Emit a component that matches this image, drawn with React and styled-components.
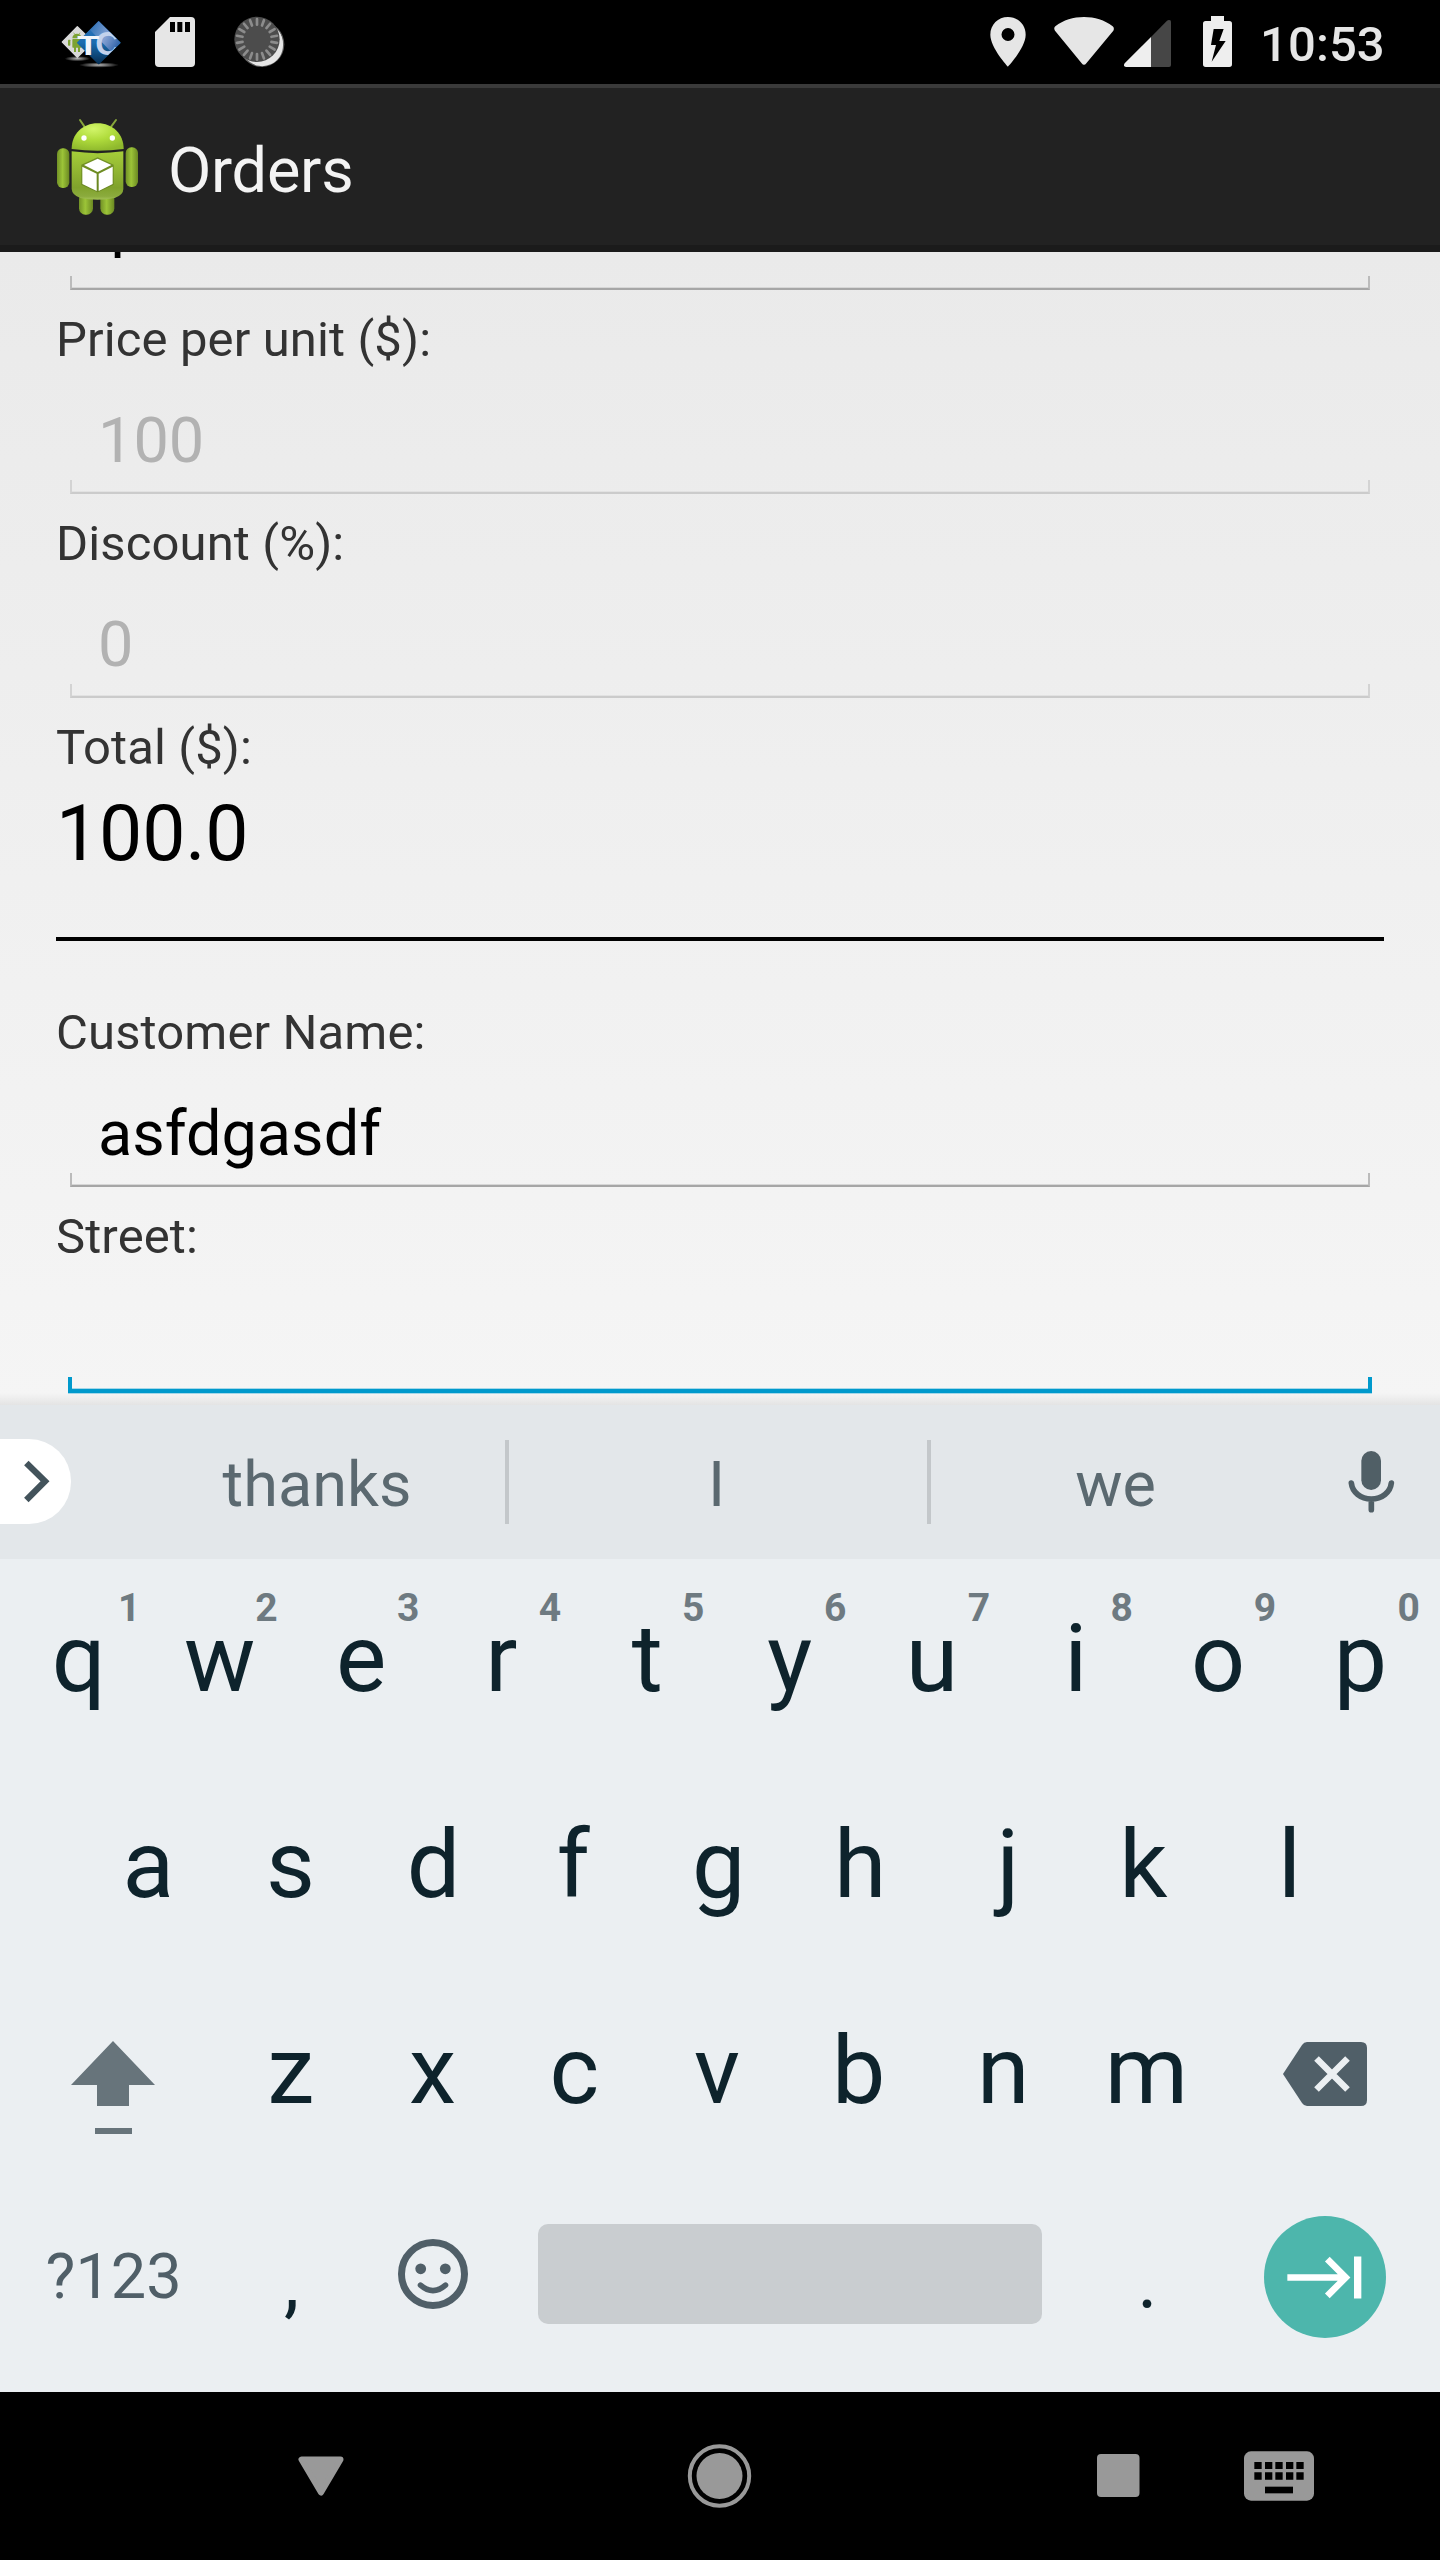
import React from 'react';
import styled, { createGlobalStyle } from 'styled-components';

const Global = createGlobalStyle`
  html, body { margin: 0; padding: 0; background: #000; }
  * { box-sizing: border-box; }
  svg { display: block; flex: none; }
`;

const Screen = styled.div`
  width: 1440px;
  height: 2560px;
  display: flex;
  flex-direction: column;
  overflow: hidden;
  font-family: Roboto, 'Liberation Sans', sans-serif;
  white-space: nowrap;
`;

/* ---------- status bar ---------- */

const StatusBar = styled.header`
  flex: none;
  height: 84px;
  padding: 16px 56px 0 61px;
  display: flex;
  justify-content: space-between;
  background: #000;
`;

const StatusGroup = styled.div`
  display: flex;
  align-items: flex-start;
`;

const StatusIcon = styled.svg`
  width: ${(p) => p.$w}px;
  height: 53px;
  margin-right: ${(p) => p.$after || 0}px;
`;

const Clock = styled.span`
  width: 124px;
  padding-right: 1px;
  text-align: right;
  font-size: 49px;
  font-weight: 500;
  line-height: 57px;
  letter-spacing: 0.1px;
  color: #e6e6e6;
`;

/* ---------- action bar ---------- */

const ActionBar = styled.div`
  flex: none;
  height: 168px;
  padding: 0 0 0 55px;
  display: flex;
  align-items: center;
  gap: 28px;
  background: #222;
  border-top: 4px solid #3a3a3a;
  border-bottom: 7px solid #1b1b1b;
`;

const Title = styled.h1`
  margin: 9px 0 0;
  font-size: 63px;
  font-weight: 400;
  line-height: 74px;
  letter-spacing: -0.25px;
  color: #f3f3f3;
`;

/* ---------- form ---------- */

const ScrollArea = styled.main`
  flex: none;
  height: 1153px;
  overflow: hidden;
  background:
    linear-gradient(to bottom, rgba(0, 0, 0, 0) 1141px, rgba(0, 0, 0, 0.07) 1153px),
    linear-gradient(to bottom, #eaeaea, #f5f5f5);
`;

const Form = styled.div`
  margin-top: -88px;
  padding: 0 56px;
  display: flex;
  flex-direction: column;
`;

const Label = styled.label`
  height: 57px;
  font-size: 49px;
  line-height: 57px;
  letter-spacing: 0.12px;
  color: #333;
`;

const Field = styled.div`
  height: 147px;
  padding: 36px ${(p) => (p.$focused ? 12 : 14)}px 0;
`;

const Value = styled.div`
  height: 76px;
  padding-left: 28px;
  font-size: 63px;
  line-height: 74px;
  color: ${(p) => (p.$disabled ? '#b2b2b2' : '#000')};
`;

const Underline = styled.div`
  height: 14px;
  border: 2px solid ${(p) => (p.$disabled ? '#cbcbcb' : '#a6a6a6')};
  border-left-color: ${(p) => (p.$disabled ? '#d3d3d3' : '#bbb')};
  border-right-color: ${(p) => (p.$disabled ? '#d3d3d3' : '#bbb')};
  border-top: 0;
  box-shadow: inset 0 -1px 0 ${(p) => (p.$disabled ? '#e2e2e2' : '#d6d6d6')};
`;

const FocusUnderline = styled.div`
  height: 16px;
  border: 4px solid #0099cc;
  border-top: 0;
  box-shadow: inset 0 -1px 0 #a5d7e8, 0 1px 0 #a5d7e8;
`;

const TotalValue = styled.div`
  height: 161px;
  padding-top: 13px;
  font-size: 77px;
  line-height: 90px;
  letter-spacing: -0.2px;
  color: #000;
`;

const Divider = styled.hr`
  width: 100%;
  height: 4px;
  margin: 0 0 63px;
  border: 0;
  background: #000;
`;

/* ---------- keyboard ---------- */

const Suggestions = styled.div`
  flex: none;
  height: 154px;
  display: flex;
  align-items: center;
  background: #e3e7ea;
`;

const ExpandPill = styled.div`
  width: 71px;
  height: 85px;
  margin: 0 55px 1px 0;
  display: flex;
  align-items: center;
  justify-content: flex-end;
  padding-right: 19px;
  border-radius: 0 42px 42px 0;
  background: #fff;
`;

const Suggestion = styled.div`
  width: ${(p) => p.$w}px;
  padding: 5px ${(p) => p.$padRight || 0}px 0 ${(p) => p.$padLeft || 0}px;
  text-align: center;
  font-size: 63px;
  line-height: 74px;
  color: #5b6970;
`;

const Separator = styled.div`
  width: 4px;
  height: 84px;
  background: #c3c7ca;
`;

const MicCell = styled.div`
  width: 138px;
  display: flex;
  justify-content: center;
`;

const Keys = styled.div`
  flex: none;
  height: 833px;
  padding: 4px 6px 0;
  background: #ebeff2;
`;

const Row = styled.div`
  height: 206px;
  display: flex;
  justify-content: center;
`;

const Key = styled.div`
  width: ${(p) => (p.$span || 1) * 142.8}px;
  height: 206px;
  padding-bottom: 15px;
  position: relative;
  display: flex;
  align-items: center;
  justify-content: center;
  font-size: 95px;
  line-height: 111px;
  color: #0e232c;
`;

/* Centres the ink of a letter rather than its advance width. */
const Letter = styled.span`
  margin-left: ${(p) => p.$nudge * 2}px;
`;

const Hint = styled.span`
  position: absolute;
  top: 22px;
  right: ${(p) => p.$right}px;
  font-size: 39px;
  font-weight: 700;
  line-height: 46px;
  color: #6e7a81;
`;

const ModeText = styled.span`
  padding-left: 1px;
  font-size: 63px;
  line-height: 74px;
  color: #505f68;
`;

const Punctuation = styled.span`
  padding: 11px ${(p) => p.$padRight || 0}px 0 0;
  font-size: 77px;
  line-height: 90px;
`;

const ShiftBox = styled.div`
  padding-top: 35px;
`;

const BackspaceBox = styled.div`
  padding: 7px 4px 0 0;
`;

const EmojiBox = styled.div`
  padding: 0 3px 5px 0;
`;

const SpaceBar = styled.div`
  width: 504px;
  height: 100px;
  margin: 0 2px 5px 0;
  border-radius: 10px;
  background: #c9cdd0;
`;

const EnterButton = styled.div`
  width: 122px;
  height: 122px;
  margin-right: 3px;
  display: flex;
  align-items: center;
  justify-content: center;
  border-radius: 50%;
  background: #4db6ac;
`;

/* ---------- navigation bar ---------- */

const NavBar = styled.nav`
  flex: none;
  height: 168px;
  padding: 0 126px 0 298px;
  display: flex;
  align-items: center;
  background: #000;
`;

const NavIcon = styled.svg`
  margin: 0 ${(p) => p.$after || 0}px 1px 0;
`;

/* ---------- drawings ---------- */

const TcIcon = () => (
  <StatusIcon $w={60} $after={34} viewBox="183 48 180 159">
    <defs>
      <linearGradient id="tcBlue" x1="0" y1="0" x2="0" y2="1">
        <stop offset="0" stopColor="#2e6fb8" />
        <stop offset="0.5" stopColor="#1a6db0" />
        <stop offset="1" stopColor="#062f55" />
      </linearGradient>
      <linearGradient id="tcShine" x1="0" y1="0" x2="1" y2="0.6">
        <stop offset="0" stopColor="#7c9dd0" stopOpacity="0" />
        <stop offset="0.6" stopColor="#8fa6d6" stopOpacity="0.9" />
        <stop offset="1" stopColor="#3768ac" />
      </linearGradient>
      <radialGradient id="tcGlow">
        <stop offset="0" stopColor="#bbb" />
        <stop offset="1" stopColor="#000" />
      </radialGradient>
      <clipPath id="tcClip"><path d="M296 63L362 128L296 193L231 128Z" /></clipPath>
    </defs>
    <ellipse cx="232" cy="176" rx="38" ry="8" fill="url(#tcGlow)" />
    <ellipse cx="297" cy="195" rx="60" ry="8" fill="url(#tcGlow)" />
    <path d="M232 80L279 126L232 172L187 126Z" fill="#dadada" stroke="#dadada" strokeWidth="4" strokeLinejoin="round" />
    <g fill="#7da333">
      <path d="M217 115a14 14 0 0 1 28 0Z" />
      <path d="M221 98l4 6M240 98l-4 6" stroke="#7da333" strokeWidth="2" />
      <rect x="217" y="117" width="28" height="26" rx="2" />
      <rect x="204" y="119" width="7" height="18" rx="2" />
      <rect x="222" y="141" width="6" height="15" />
      <rect x="234" y="141" width="6" height="15" />
    </g>
    <path d="M296 65L360 128L296 191L233 128Z" fill="url(#tcBlue)" stroke="url(#tcBlue)" strokeWidth="4" strokeLinejoin="round" />
    <g clipPath="url(#tcClip)">
      <path d="M296 63L362 128L334 156L270 90Z" fill="url(#tcShine)" />
      <text x="286" y="165" fontFamily="Liberation Sans, sans-serif" fontWeight="700" fontSize="102" fill="#c3d2ec">C</text>
    </g>
    <text x="232" y="164" fontFamily="Liberation Sans, sans-serif" fontWeight="700" fontSize="81" textLength="66" lengthAdjust="spacingAndGlyphs" fill="#f1f5fa">T</text>
  </StatusIcon>
);

const SdIcon = () => (
  <StatusIcon $w={40} $after={39} viewBox="465 48 120 159">
    <path d="M510 51H573a12 12 0 0 1 12 12V189a12 12 0 0 1-12 12H477a12 12 0 0 1-12-12V96Z" fill="#e6e6e6" />
    <path d="M510 66h15v30h-15zM532 66h15v30h-15zM555 66h15v30h-15z" fill="#000" />
  </StatusIcon>
);

const SpinnerIcon = () => (
  <StatusIcon $w={51} viewBox="701 48 153 159">
    <circle cx="784" cy="133" r="68" fill="#5c5c5c" />
    <path d="M834 92A66 66 0 0 1 744 182A62 62 0 0 0 848 136A66 66 0 0 0 834 92Z" fill="#e6e6e6" />
    <circle cx="781" cy="129" r="65" fill="#e6e6e6" />
    <circle cx="770" cy="118" r="68" fill="#4c4c4c" />
    {Array.from({ length: 18 }, (_, i) => (
      <path key={i} d="M770 57V74" stroke="#8c8c8c" strokeWidth="8" strokeLinecap="round" transform={`rotate(${i * 20} 770 118)`} />
    ))}
  </StatusIcon>
);

const PinIcon = () => (
  <StatusIcon $w={36} $after={28} viewBox="90 48 108 159">
    <path
      fillRule="evenodd"
      fill="#e6e6e6"
      d="M144 51C114 51 91 74 91 104C91 143 144 200 144 200S197 143 197 104C197 74 174 51 144 51ZM144 84a19.500 19.500 0 1 1 0 39a19.500 19.500 0 1 1 0-39Z"
    />
  </StatusIcon>
);

const WifiIcon = () => (
  <StatusIcon $w={60} $after={10} viewBox="282 48 180 159">
    <path d="M286 79C310 60 340 51 372 51S434 60 458 79Q464 84 460 92L379 190Q372 199 365 190L285 92Q280 84 286 79Z" fill="#e6e6e6" />
  </StatusIcon>
);

const SignalIcon = () => (
  <StatusIcon $w={47} $after={32} viewBox="492 48 141 159">
    <path d="M573 111L621 62Q626 58 631 61Q633 63 633 67V195Q633 201 627 201H573Z" fill="#464646" />
    <path d="M573 111V201H498Q488 199 494 190Z" fill="#eee" />
  </StatusIcon>
);

const BatteryIcon = () => (
  <StatusIcon $w={29} $after={28} viewBox="729 48 87 159">
    <path d="M753 48H792V63H808Q816 63 816 71V193Q816 201 808 201H737Q729 201 729 193V71Q729 63 737 63H753Z" fill="#eee" />
    <path d="M761 87H791L778 123H797L755 185L768 135H753Z" fill="#000" />
  </StatusIcon>
);

const Robot = () => (
  <svg width="85" height="102" viewBox="165 351 255 306">
    <defs>
      <radialGradient id="head" cx="0.42" cy="0.2" r="0.8">
        <stop offset="0" stopColor="#d2f56a" />
        <stop offset="0.5" stopColor="#b0dc3c" />
        <stop offset="1" stopColor="#8fb92d" />
      </radialGradient>
      <linearGradient id="torso" x1="0" y1="0" x2="0" y2="1">
        <stop offset="0" stopColor="#a5cd39" />
        <stop offset="0.75" stopColor="#80a22c" />
        <stop offset="0.93" stopColor="#8bab3d" />
        <stop offset="1" stopColor="#a4c257" />
      </linearGradient>
      <linearGradient id="limb" x1="0" y1="0" x2="1" y2="0">
        <stop offset="0" stopColor="#729226" />
        <stop offset="0.45" stopColor="#9cc438" />
        <stop offset="1" stopColor="#6b8922" />
      </linearGradient>
    </defs>
    <path d="M240 363L253 382M348 363L334 382" stroke="#86a53a" strokeWidth="6" strokeLinecap="round" />
    <rect x="237" y="580" width="42" height="67" rx="19" fill="url(#limb)" />
    <rect x="301" y="580" width="42" height="67" rx="19" fill="url(#limb)" />
    <rect x="171" y="448" width="37" height="119" rx="17" fill="url(#limb)" />
    <rect x="377" y="445" width="37" height="119" rx="17" fill="url(#limb)" />
    <path d="M215 450C215 405 248 373 293 373S371 405 371 450Q293 461 215 450Z" fill="url(#head)" />
    <path d="M215 457Q293 468 370 457V570Q370 588 344 597Q293 607 241 597Q216 588 215 570Z" fill="url(#torso)" />
    <circle cx="252" cy="417" r="8" fill="#fff" />
    <circle cx="337" cy="417" r="8" fill="#fff" />
    <path d="M244 497L293 475L341 497V557L293 580L244 557Z" fill="#5f7b1c" opacity="0.7" />
    <g fill="#fff">
      <path d="M293 479L334 498L293 519L252 498Z" />
      <path d="M247 503L290 524V576L247 555Z" />
      <path d="M338 503L296 524V576L338 555Z" />
    </g>
  </svg>
);

const Chevron = () => (
  <svg width="30" height="45" viewBox="66 207 90 135">
    <path d="M79 219L135 274L79 330" fill="none" stroke="#43535b" strokeWidth="19" />
  </svg>
);

const Mic = () => (
  <svg width="48" height="62" viewBox="1161 900 144 186">
    <rect x="1204" y="900" width="59" height="117" rx="29.500" fill="#505f66" />
    <path d="M1174 996C1177 1024 1202 1044 1234 1044S1291 1024 1294 996M1234 1044V1076" fill="none" stroke="#505f66" strokeWidth="17" strokeLinecap="round" />
  </svg>
);

const Shift = () => (
  <svg width="84" height="134" viewBox="71 2021 84 134">
    <path d="M113 2041L155 2085H129V2106H97V2085H71ZM95 2128H132V2134H95Z" fill="#67747b" />
  </svg>
);

const Backspace = () => (
  <svg width="84" height="64" viewBox="1283 2042 84 64">
    <path d="M1307 2042H1361Q1367 2042 1367 2048V2100Q1367 2106 1361 2106H1307Q1304 2106 1302 2103L1283 2074L1302 2045Q1304 2042 1307 2042Z" fill="#505f68" />
    <path d="M1316.500 2058.500L1347.500 2089.500M1347.500 2058.500L1316.500 2089.500" stroke="#ebeff2" strokeWidth="6.500" />
  </svg>
);

const Emoji = () => (
  <svg width="70" height="70" viewBox="0 0 70 70">
    <circle cx="35" cy="35" r="31.500" fill="none" stroke="#505f68" strokeWidth="7" />
    <circle cx="22.700" cy="29.800" r="5.400" fill="#505f68" />
    <circle cx="47.300" cy="29.800" r="5.400" fill="#505f68" />
    <path d="M22.500 46.200Q35 57 47.500 46.200" fill="none" stroke="#505f68" strokeWidth="5.600" strokeLinecap="round" />
  </svg>
);

const TabArrow = () => (
  <svg width="122" height="122" viewBox="914 166.500 366 366">
    <path d="M984 351H1155M1104 296L1159 351L1104 406" fill="none" stroke="#fff" strokeWidth="20" />
    <rect x="1184" y="288" width="22" height="126" fill="#fff" />
  </svg>
);

/* Each letter with the pixels that bring its ink to the middle of the key. */
const TOP_ROW = [
  ['q', 1.3], ['w', -0.5], ['e', -1.8], ['r', -4.5], ['t', -1.2],
  ['y', -1.6], ['u', -2.2], ['i', -1.3], ['o', -1.8], ['p', -2.1],
];
const HOME_ROW = [
  ['a', -0.5], ['s', -1.1], ['d', -0.8], ['f', -3.9], ['g', -1.3],
  ['h', -2.6], ['j', 2.5], ['k', -5], ['l', -1.7],
];
const BOTTOM_ROW = [
  ['z', -0.8], ['x', -1.9], ['c', -2.8], ['v', -3], ['b', -4.1], ['n', -2.4], ['m', -1.9],
];

const HINT_RIGHT = [8.5, 14, 15, 16, 15.5, 16.5, 15.5, 15.5, 15, 14];

const LetterKey = ({ letter, nudge, children }) => (
  <Key>
    <Letter $nudge={nudge}>{letter}</Letter>
    {children}
  </Key>
);

const FormField = ({ label, value, disabled }) => (
  <>
    {label && <Label>{label}</Label>}
    <Field>
      <Value $disabled={disabled}>{value}</Value>
      <Underline $disabled={disabled} />
    </Field>
  </>
);

export default function App() {
  return (
    <Screen>
      <Global />
      <StatusBar>
        <StatusGroup>
          <TcIcon />
          <SdIcon />
          <SpinnerIcon />
        </StatusGroup>
        <StatusGroup>
          <PinIcon />
          <WifiIcon />
          <SignalIcon />
          <BatteryIcon />
          <Clock>10:53</Clock>
        </StatusGroup>
      </StatusBar>

      <ActionBar>
        <Robot />
        <Title>Orders</Title>
      </ActionBar>

      <ScrollArea>
        <Form>
          <FormField value="1" />
          <FormField label="Price per unit ($):" value="100" disabled />
          <FormField label="Discount (%):" value="0" disabled />
          <Label>Total ($):</Label>
          <TotalValue>100.0</TotalValue>
          <Divider />
          <FormField label="Customer Name:" value="asfdgasdf" />
          <Label>Street:</Label>
          <Field $focused>
            <Value />
            <FocusUnderline />
          </Field>
        </Form>
      </ScrollArea>

      <Suggestions>
        <ExpandPill><Chevron /></ExpandPill>
        <Suggestion $w={379} $padLeft={3}>thanks</Suggestion>
        <Separator />
        <Suggestion $w={418} $padRight={3}>I</Suggestion>
        <Separator />
        <Suggestion $w={371} $padRight={2}>we</Suggestion>
        <MicCell><Mic /></MicCell>
      </Suggestions>

      <Keys>
        <Row>
          {TOP_ROW.map(([letter, nudge], i) => (
            <LetterKey key={letter} letter={letter} nudge={nudge}>
              <Hint $right={HINT_RIGHT[i]}>{(i + 1) % 10}</Hint>
            </LetterKey>
          ))}
        </Row>
        <Row>
          {HOME_ROW.map(([letter, nudge]) => <LetterKey key={letter} letter={letter} nudge={nudge} />)}
        </Row>
        <Row>
          <Key $span={1.5}><ShiftBox><Shift /></ShiftBox></Key>
          {BOTTOM_ROW.map(([letter, nudge]) => <LetterKey key={letter} letter={letter} nudge={nudge} />)}
          <Key $span={1.5}><BackspaceBox><Backspace /></BackspaceBox></Key>
        </Row>
        <Row>
          <Key $span={1.5}><ModeText>?123</ModeText></Key>
          <Key><Punctuation>,</Punctuation></Key>
          <Key><EmojiBox><Emoji /></EmojiBox></Key>
          <Key $span={4}><SpaceBar /></Key>
          <Key><Punctuation $padRight={2}>.</Punctuation></Key>
          <Key $span={1.5}><EnterButton><TabArrow /></EnterButton></Key>
        </Row>
      </Keys>

      <NavBar>
        <NavIcon $after={343} width="46" height="40" viewBox="0 0 46 40">
          <path d="M3.500 3.500H42.500L23 36.500Z" fill="#999" stroke="#999" strokeWidth="6" strokeLinejoin="round" />
        </NavIcon>
        <NavIcon $after={345} width="65" height="64" viewBox="-0.500 0 65 64">
          <circle cx="32" cy="32" r="29.700" fill="none" stroke="#999" strokeWidth="4" />
          <circle cx="32" cy="32" r="23" fill="#999" />
        </NavIcon>
        <NavIcon $after={104} width="43" height="43" viewBox="0 0 43 43">
          <rect width="42.500" height="43" rx="4" fill="#999" />
        </NavIcon>
        <NavIcon width="70" height="50" viewBox="852 873 210 150">
          <rect x="852" y="874" width="210" height="148" rx="21" fill="#999" />
          {[883, 915, 946, 978, 1009].map((x) => (
            <path key={x} d={`M${x} 906h22v21h-22zM${x} 937h22v22h-22z`} fill="#000" />
          ))}
          <rect x="915" y="980" width="84" height="20" fill="#000" />
        </NavIcon>
      </NavBar>
    </Screen>
  );
}
